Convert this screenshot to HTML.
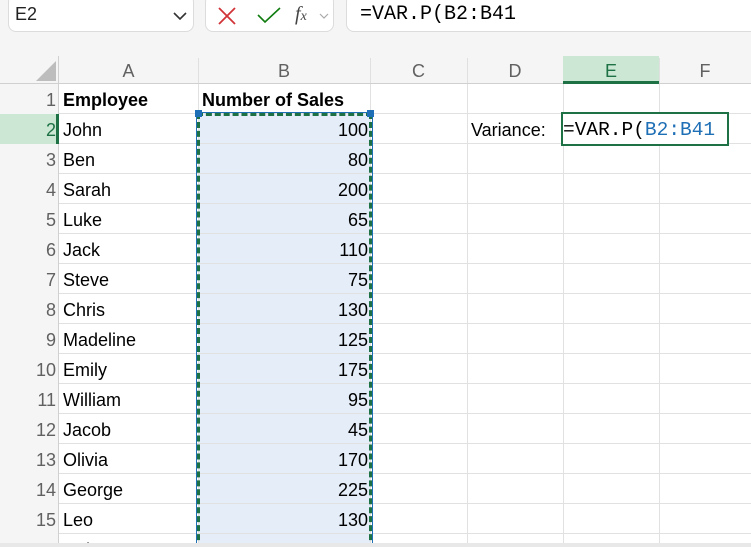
<!DOCTYPE html><html><head><style>
*{margin:0;padding:0;box-sizing:border-box}
html,body{width:751px;height:547px;overflow:hidden}
body{background:#f5f5f5;font-family:"Liberation Sans",sans-serif}
#w{position:relative;width:751px;height:547px;overflow:hidden}
.a{position:absolute}
.box{position:absolute;background:#fff;border:1px solid #dcdcdc;border-radius:8px}
.v{position:absolute;top:84px;width:1px;height:460px;background:#e1e1e1}
.h{position:absolute;left:59px;width:692px;height:1px;background:#e1e1e1}
.rn{position:absolute;left:0;width:56px;text-align:right;font-size:18px;color:#616161;height:30px;line-height:33px}
.c{position:absolute;font-size:18px;color:#000;height:30px;line-height:33px}
.n{position:absolute;left:200px;width:168px;text-align:right;font-size:18px;height:30px;line-height:33px}
.ch{position:absolute;top:56px;height:28px;line-height:30px;text-align:center;font-size:18px;color:#616161}
.m{font-family:"Liberation Mono",monospace}
</style></head><body><div id="w">
<div class="box" style="left:8px;top:-6px;width:186px;height:38px"></div>
<div class="a" style="left:15px;top:4px;font-size:18px;color:#222">E2</div>
<svg class="a" style="left:172px;top:11px" width="16" height="10"><path d="M2 2 L8 8 L14 2" stroke="#333" stroke-width="1.6" fill="none"/></svg>
<div class="box" style="left:205px;top:-6px;width:129px;height:38px"></div>
<svg class="a" style="left:216px;top:5px" width="22" height="22"><path d="M3 3 L19 19 M19 3 L3 19" stroke="#d13438" stroke-width="1.8"/></svg>
<svg class="a" style="left:256px;top:5px" width="26" height="20"><path d="M2 10 L9 17 L24 3" stroke="#107c10" stroke-width="1.6" fill="none"/></svg>
<div class="a" style="left:295px;top:3px;font-family:'Liberation Serif',serif;font-style:italic;font-size:20px;color:#444">f<span style="font-size:14px">x</span></div>
<svg class="a" style="left:319px;top:13px" width="10" height="6"><path d="M1 1 L5 5 L9 1" stroke="#aaa" stroke-width="1.2" fill="none"/></svg>
<div class="box" style="left:346px;top:-6px;width:420px;height:38px"></div>
<div class="a m" style="left:360px;top:3px;font-size:20px;color:#000">=VAR.P(B2:B41</div>
<div class="a" style="left:59px;top:84px;width:692px;height:460px;background:#fff"></div>
<div class="a" style="left:0;top:83px;width:751px;height:1px;background:#d0d0d0"></div>
<div class="a" style="left:58px;top:56px;width:1px;height:488px;background:#d0d0d0"></div>
<svg class="a" style="left:36px;top:61px" width="20" height="20"><path d="M20 0 L20 20 L0 20 Z" fill="#bdbdbd"/></svg>
<div class="a" style="left:563px;top:56px;width:96px;height:27px;background:#cce8d5"></div>
<div class="a" style="left:563px;top:81px;width:96px;height:3px;background:#1e7145"></div>
<div class="a" style="left:0;top:114px;width:58px;height:30px;background:#cce8d5"></div>
<div class="a" style="left:56px;top:114px;width:3px;height:30px;background:#1e7145"></div>
<div class="ch" style="left:59px;width:139px">A</div>
<div class="ch" style="left:198px;width:172px">B</div>
<div class="ch" style="left:370px;width:97px">C</div>
<div class="ch" style="left:467px;width:96px">D</div>
<div class="ch" style="left:563px;width:96px;color:#1e7145">E</div>
<div class="ch" style="left:659px;width:92px">F</div>
<div class="a" style="left:198px;top:58px;width:1px;height:25px;background:#e0e0e0"></div>
<div class="a" style="left:370px;top:58px;width:1px;height:25px;background:#e0e0e0"></div>
<div class="a" style="left:467px;top:58px;width:1px;height:25px;background:#e0e0e0"></div>
<div class="a" style="left:659px;top:58px;width:1px;height:25px;background:#e0e0e0"></div>
<div class="a" style="left:198px;top:114px;width:172px;height:430px;background:#e4edf8"></div>
<div class="v" style="left:198px"></div><div class="v" style="left:370px"></div><div class="v" style="left:467px"></div><div class="v" style="left:563px"></div><div class="v" style="left:659px"></div>
<div class="h" style="top:113px"></div><div class="h" style="top:143px"></div><div class="h" style="top:173px"></div><div class="h" style="top:203px"></div><div class="h" style="top:233px"></div><div class="h" style="top:263px"></div><div class="h" style="top:293px"></div><div class="h" style="top:323px"></div><div class="h" style="top:353px"></div><div class="h" style="top:383px"></div><div class="h" style="top:413px"></div><div class="h" style="top:443px"></div><div class="h" style="top:473px"></div><div class="h" style="top:503px"></div><div class="h" style="top:533px"></div>
<div class="rn" style="top:84px">1</div><div class="rn" style="top:114px;color:#1e7145">2</div><div class="rn" style="top:144px">3</div><div class="rn" style="top:174px">4</div><div class="rn" style="top:204px">5</div><div class="rn" style="top:234px">6</div><div class="rn" style="top:264px">7</div><div class="rn" style="top:294px">8</div><div class="rn" style="top:324px">9</div><div class="rn" style="top:354px">10</div><div class="rn" style="top:384px">11</div><div class="rn" style="top:414px">12</div><div class="rn" style="top:444px">13</div><div class="rn" style="top:474px">14</div><div class="rn" style="top:504px">15</div><div class="rn" style="top:534px">16</div>
<div class="c" style="left:63px;top:84px;font-weight:bold">Employee</div>
<div class="c" style="left:202px;top:84px;font-weight:bold">Number of Sales</div>
<div class="c" style="left:63px;top:114px">John</div><div class="c" style="left:63px;top:144px">Ben</div><div class="c" style="left:63px;top:174px">Sarah</div><div class="c" style="left:63px;top:204px">Luke</div><div class="c" style="left:63px;top:234px">Jack</div><div class="c" style="left:63px;top:264px">Steve</div><div class="c" style="left:63px;top:294px">Chris</div><div class="c" style="left:63px;top:324px">Madeline</div><div class="c" style="left:63px;top:354px">Emily</div><div class="c" style="left:63px;top:384px">William</div><div class="c" style="left:63px;top:414px">Jacob</div><div class="c" style="left:63px;top:444px">Olivia</div><div class="c" style="left:63px;top:474px">George</div><div class="c" style="left:63px;top:504px">Leo</div><div class="c" style="left:63px;top:534px">Arthur</div>
<div class="n" style="top:114px">100</div><div class="n" style="top:144px">80</div><div class="n" style="top:174px">200</div><div class="n" style="top:204px">65</div><div class="n" style="top:234px">110</div><div class="n" style="top:264px">75</div><div class="n" style="top:294px">130</div><div class="n" style="top:324px">125</div><div class="n" style="top:354px">175</div><div class="n" style="top:384px">95</div><div class="n" style="top:414px">45</div><div class="n" style="top:444px">170</div><div class="n" style="top:474px">225</div><div class="n" style="top:504px">130</div><div class="n" style="top:534px">70</div>
<div class="a" style="left:197px;top:113px;width:175px;height:445px;border:3px dashed #1e7145;outline:1px solid #1e6fb5"></div>
<div class="a" style="left:195px;top:110px;width:7px;height:7px;background:#1e6fb5"></div>
<div class="a" style="left:367px;top:110px;width:7px;height:7px;background:#1e6fb5"></div>
<div class="c" style="left:471px;top:114px">Variance:</div>
<div class="a" style="left:561px;top:112px;width:168px;height:34px;border:2px solid #1e7145;background:#fff"></div>
<div class="a m" style="left:563px;top:114px;font-size:19.5px;line-height:32px">=VAR.P(<span style="color:#1e6fb5">B2:B41</span></div>
<div class="a" style="left:0;top:543px;width:751px;height:4px;background:#e8e8e8"></div>
</div></body></html>
